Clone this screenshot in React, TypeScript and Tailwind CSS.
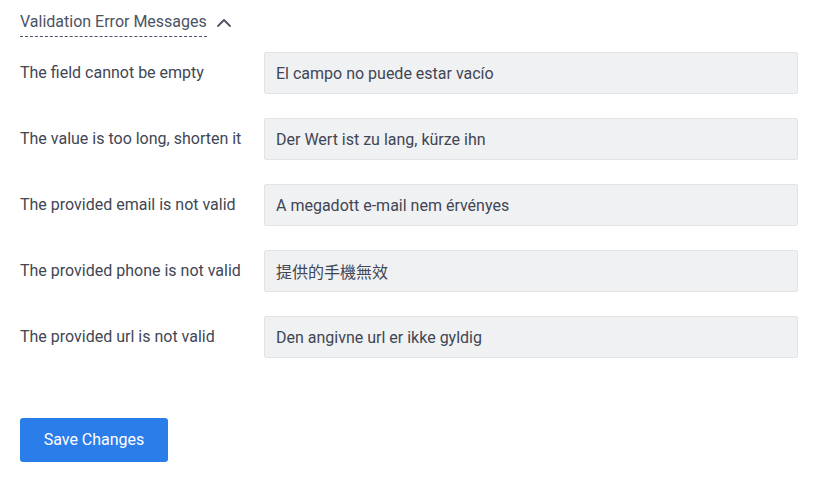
import { ChevronUp } from "lucide-react";

const rows = [
  { label: "The field cannot be empty", value: "El campo no puede estar vacío" },
  { label: "The value is too long, shorten it", value: "Der Wert ist zu lang, kürze ihn" },
  { label: "The provided email is not valid", value: "A megadott e-mail nem érvényes" },
  { label: "The provided phone is not valid", value: "提供的手機無效" },
  { label: "The provided url is not valid", value: "Den angivne url er ikke gyldig" },
];

export default function App() {
  return (
    <div
      className="w-[820px] h-[480px] bg-white px-5 pt-[8px] text-base text-[#3f4654]"
      style={{ fontFamily: "Roboto, 'Noto Sans CJK TC', sans-serif" }}
    >
      {/* Section header */}
      <div className="flex items-center gap-[5px] h-[29px]">
        <span className="border-b border-dashed border-[#4b5363] leading-[28px] text-[#4b5363]">
          Validation Error Messages
        </span>
        <ChevronUp className="w-6 h-6 text-[#4b5363]" strokeWidth={1.8} />
      </div>

      {/* Message rows */}
      <div className="mt-[15px] flex flex-col gap-6">
        {rows.map((row) => (
          <div key={row.label} className="flex items-center">
            <label className="w-[244px] flex-shrink-0">{row.label}</label>
            <input
              type="text"
              defaultValue={row.value}
              className="w-[534px] h-[42px] px-[11px] bg-[#f0f1f3] border border-[#e2e3e5] rounded-[2px] text-base text-[#3f4654] focus:outline-none"
              style={{ fontFamily: "Roboto, 'Noto Sans CJK TC', sans-serif" }}
            />
          </div>
        ))}
      </div>

      {/* Save */}
      <button className="mt-[60px] w-[148px] h-[44px] rounded-[3px] bg-[#2b7de9] text-white text-base">
        Save Changes
      </button>
    </div>
  );
}
